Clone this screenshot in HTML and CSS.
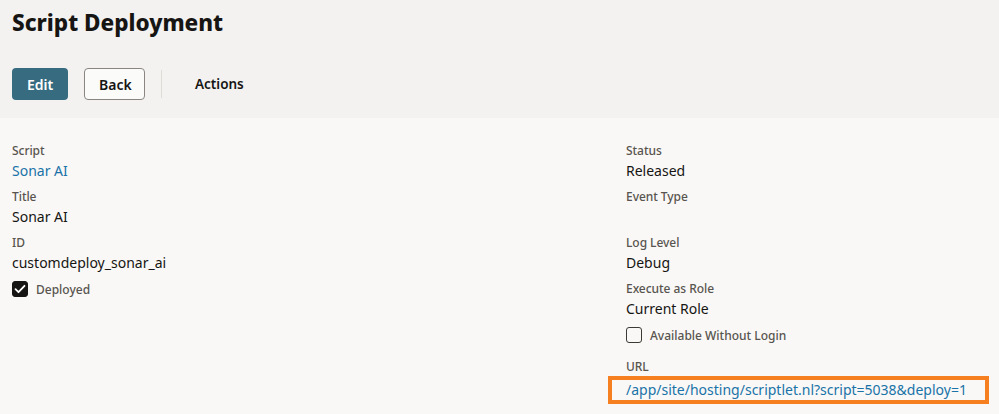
FILE: index.html
```html
<!DOCTYPE html>
<html>

<head>
	<meta charset="utf-8">
	<title>Script Deployment</title>
	<link rel="stylesheet" href="styles.css">
</head>

<body>
	<div class="header">
		<h1 class="title">Script Deployment</h1>
		<div class="toolbar">
			<button class="btn btn-primary">Edit</button>
			<button class="btn btn-outline">Back</button>
			<span class="sep"></span>
			<button class="btn btn-text">Actions</button>
		</div>
	</div>
	<div class="content">
		<div class="col">
			<div class="field">
				<div class="label">Script</div>
				<div class="value"><a href="#">Sonar AI</a></div>
			</div>
			<div class="field">
				<div class="label">Title</div>
				<div class="value">Sonar AI</div>
			</div>
			<div class="field">
				<div class="label">ID</div>
				<div class="value">customdeploy_sonar_ai</div>
			</div>
			<div class="check">
				<span class="box checked">
					<svg width="12" height="10" viewBox="0 0 12 10"><path d="M1.5 5.2 L4.5 8.2 L10.5 1.8" fill="none" stroke="#fff" stroke-width="1.8" stroke-linecap="round" stroke-linejoin="round"/></svg>
				</span>
				<span class="check-text">Deployed</span>
			</div>
		</div>
		<div class="col">
			<div class="field">
				<div class="label">Status</div>
				<div class="value">Released</div>
			</div>
			<div class="field">
				<div class="label">Event Type</div>
				<div class="value"></div>
			</div>
			<div class="field">
				<div class="label">Log Level</div>
				<div class="value">Debug</div>
			</div>
			<div class="field">
				<div class="label">Execute as Role</div>
				<div class="value">Current Role</div>
			</div>
			<div class="check check-gap">
				<span class="box"></span>
				<span class="check-text">Available Without Login</span>
			</div>
			<div class="field">
				<div class="label">URL</div>
				<div class="value"><a href="#" class="url">/app/site/hosting/scriptlet.nl?script=5038&amp;deploy=1</a></div>
			</div>
		</div>
	</div>
</body>

</html>
```

FILE: styles.css
```css
body {
	margin: 0;
	background-color: #f9f8f6;
	color: #161513;
	font-family: "Noto Sans", "Liberation Sans", sans-serif;
}

.header {
	background-color: #f3f2f0;
	padding: 8px 12px 18px;
}

.title {
	margin: 0 0 30px;
	font-size: 22.5px;
	line-height: 30px;
	font-weight: 800;
}

.toolbar {
	display: flex;
	align-items: center;
	gap: 16px;
	height: 32px;
}

.btn {
	height: 32px;
	border-radius: 4px;
	font-family: inherit;
	font-size: 14px;
	font-weight: 600;
	padding: 0 14px;
	cursor: pointer;
}

.btn-primary {
	width: 56px;
	background-color: #366b80;
	border: none;
	color: white;
}

.btn-outline {
	width: 61px;
	background-color: #fbfbfa;
	border: 1px solid #8b8681;
	color: #161513;
}

.btn-text {
	background: none;
	border: none;
	color: #161513;
	padding: 0 17px;
	font-size: 13.5px;
}

.sep {
	width: 1px;
	height: 28px;
	background-color: #dfdcd8;
}

.content {
	display: grid;
	grid-template-columns: 614px 1fr;
	padding: 24px 12px 0;
}

.field {
	margin-bottom: 6px;
}

.label {
	font-size: 12px;
	line-height: 18px;
	font-weight: 500;
	color: #58544f;
	letter-spacing: -0.05px;
}

.value {
	font-size: 14px;
	line-height: 22px;
	height: 22px;
	white-space: nowrap;
}

a {
	color: #1a73a8;
	text-decoration: none;
}

.check {
	display: flex;
	align-items: center;
	gap: 8px;
	height: 22px;
	margin-top: -2px;
}

.check-gap {
	margin-bottom: 12px;
}

.box {
	width: 16px;
	height: 16px;
	box-sizing: border-box;
	border: 1.5px solid #3d3a36;
	border-radius: 3px;
	display: flex;
	align-items: center;
	justify-content: center;
}

.box.checked {
	background-color: #161513;
	border-color: #161513;
}

.check-text {
	font-size: 12px;
	font-weight: 500;
	color: #58544f;
}

.url {
	display: inline-block;
	margin-left: -18px;
	padding: 0 18px 0 14px;
	line-height: 20px;
	border: 4px solid #f67f1f;
}
```
